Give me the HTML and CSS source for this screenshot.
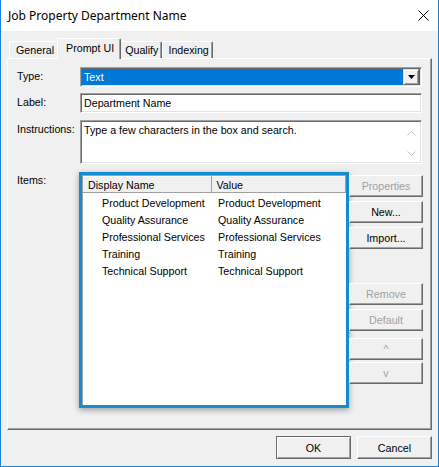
FILE: index.html
```html
<!DOCTYPE html>
<html lang="en">

<head>
    <meta charset="UTF-8">
    <meta name="viewport" content="width=device-width, initial-scale=1.0">
    <title>Job Property Department Name</title>
    <link rel="stylesheet" href="styles.css">
</head>

<body>
    <div class="window">
        <!-- title bar -->
        <div class="titlebar">
            <span class="title">Job Property Department Name</span>
            <svg class="close" width="11" height="11" viewBox="0 0 11 11">
                <path d="M0.5 0.5 L10.5 10.5 M10.5 0.5 L0.5 10.5" stroke="#000" stroke-width="1" fill="none" />
            </svg>
        </div>

        <div class="body">
            <!-- tabs -->
            <div class="tabs">
                <div class="tab">General</div>
                <div class="tab tab-active">Prompt UI</div>
                <div class="tab">Qualify</div>
                <div class="tab">Indexing</div>
            </div>

            <div class="panel">
                <div class="row row-type">
                    <div class="lbl">Type:</div>
                    <div class="select">
                        <span class="select-value">Text</span>
                        <span class="drop-btn">
                            <svg width="7" height="4" viewBox="0 0 7 4"><path d="M0 0 H7 L3.5 4 Z" fill="#000" /></svg>
                        </span>
                    </div>
                </div>

                <div class="row row-label">
                    <div class="lbl">Label:</div>
                    <div class="edit">Department Name</div>
                </div>

                <div class="row row-instr">
                    <div class="lbl">Instructions:</div>
                    <div class="edit memo">
                        <span class="memo-text">Type a few characters in the box and search.</span>
                        <span class="vscroll">
                            <svg width="9" height="5" viewBox="0 0 9 5"><path d="M0.5 4.5 L4.5 0.5 L8.5 4.5" stroke="#c4c4c4" fill="none" /></svg>
                            <svg width="9" height="5" viewBox="0 0 9 5"><path d="M0.5 0.5 L4.5 4.5 L8.5 0.5" stroke="#c4c4c4" fill="none" /></svg>
                        </span>
                    </div>
                </div>

                <div class="row row-items">
                    <div class="lbl">Items:</div>
                    <div class="items">
                        <div class="list-frame">
                            <div class="listview">
                                <table>
                                    <thead>
                                        <tr>
                                            <th class="col-name">Display Name</th>
                                            <th>Value</th>
                                        </tr>
                                    </thead>
                                    <tbody>
                                        <tr><td class="col-name">Product Development</td><td>Product Development</td></tr>
                                        <tr><td class="col-name">Quality Assurance</td><td>Quality Assurance</td></tr>
                                        <tr><td class="col-name">Professional Services</td><td>Professional Services</td></tr>
                                        <tr><td class="col-name">Training</td><td>Training</td></tr>
                                        <tr><td class="col-name">Technical Support</td><td>Technical Support</td></tr>
                                    </tbody>
                                </table>
                            </div>
                        </div>

                        <div class="side-btns">
                            <button class="btn" disabled>Properties</button>
                            <button class="btn">New...</button>
                            <button class="btn">Import...</button>
                            <button class="btn btn-remove" disabled>Remove</button>
                            <button class="btn" disabled>Default</button>
                            <button class="btn btn-up" disabled>^</button>
                            <button class="btn btn-down" disabled>v</button>
                        </div>
                    </div>
                </div>
            </div>

            <!-- footer -->
            <div class="footer">
                <button class="btn btn-default">OK</button>
                <button class="btn">Cancel</button>
            </div>
        </div>
    </div>
</body>

</html>
```

FILE: styles.css
```css
* {
    box-sizing: border-box;
}

body {
    margin: 0;
    font-family: "Liberation Sans", Arial, sans-serif;
    font-size: 10.7px;
    color: #000;
}

.window {
    width: 439px;
    height: 467px;
    border: 1px solid #1883d7;
    border-top: 0;
    background: #f0f0f0;
    display: flex;
    flex-direction: column;
}

/* title bar */
.titlebar {
    height: 31px;
    background: #fff;
    display: flex;
    align-items: center;
    justify-content: space-between;
    padding: 0 9px 0 7px;
}

.title {
    font-family: "Noto Sans", sans-serif;
    font-size: 12px;
    margin-top: -1px;
}

.close {
    margin-top: -1px;
}

.body {
    flex: 1;
    padding: 0 6px 0 6px;
    display: flex;
    flex-direction: column;
}

/* tabs */
.tabs {
    display: flex;
    align-items: flex-end;
    height: 20px;
    margin-top: 7px;
    padding-left: 2px;
    position: relative;
    z-index: 1;
}

.tab {
    height: 17px;
    padding: 2px 3px 0 5px;
    border-top: 1px solid #fff;
    border-left: 1px solid #fff;
    border-right: 1px solid #696969;
    box-shadow: inset -1px 0 #a0a0a0;
    border-top-left-radius: 2px;
    border-top-right-radius: 2px;
    background: #f0f0f0;
}

.tab:first-child {
    padding: 2px 4px 0 6px;
}

.tab-active {
    height: 21px;
    margin: 0 -2px -1px -2px;
    padding: 3px 6px 0 8px;
    position: relative;
}

.panel {
    height: 372px;
    border-top: 1px solid #fff;
    border-left: 1px solid #fff;
    border-right: 1px solid #696969;
    border-bottom: 1px solid #696969;
    box-shadow: inset -1px -1px #a0a0a0;
    padding: 8px 9px 0 9px;
}

.row {
    display: grid;
    grid-template-columns: 63px 1fr;
}

.row-label {
    margin-top: 6px;
}

.row-instr {
    margin-top: 7px;
}

.row-items {
    margin-top: 8px;
}

.lbl {
    padding-top: 3px;
}

.row-items .lbl {
    padding-top: 2px;
}

/* sunken edit boxes */
.select,
.edit {
    height: 20px;
    border-top: 1px solid #a0a0a0;
    border-left: 1px solid #a0a0a0;
    border-right: 1px solid #fff;
    border-bottom: 1px solid #fff;
    box-shadow: inset 1px 1px #696969, inset -1px -1px #e3e3e3;
    background: #fff;
}

.select {
    background: #0078d7;
    color: #fff;
    display: flex;
    align-items: center;
    justify-content: space-between;
    padding: 0 2px 0 3px;
}

.select-value {
    margin-top: -1px;
}

.drop-btn {
    width: 16px;
    height: 16px;
    background: #f0f0f0;
    border-top: 1px solid #e3e3e3;
    border-left: 1px solid #e3e3e3;
    border-right: 1px solid #696969;
    border-bottom: 1px solid #696969;
    box-shadow: inset 1px 1px #fff, inset -1px -1px #a0a0a0;
    display: flex;
    align-items: center;
    justify-content: center;
}

.edit {
    padding: 3px 3px 0 3px;
}

.memo {
    height: 44px;
    display: flex;
    justify-content: space-between;
    padding: 3px 1px 1px 3px;
}

.vscroll {
    width: 17px;
    display: flex;
    flex-direction: column;
    justify-content: space-between;
    align-items: center;
    padding: 7px 0 6px 0;
    background: #fff;
}

/* items list */
.items {
    display: flex;
    margin-left: -1px;
}

.list-frame {
    width: 270px;
    height: 236px;
    border: 3px solid #168bd0;
    box-shadow: 0 2px 6px rgba(0, 0, 0, 0.35);
    background: #fff;
}

.listview {
    height: 100%;
    border-top: 1px solid #a0a0a0;
    border-left: 1px solid #a0a0a0;
}

table {
    width: 263px;
    border-collapse: collapse;
}

th {
    height: 16px;
    font-weight: normal;
    text-align: left;
    padding: 0 0 0 5px;
    background: #f0f0f0;
    border-top: 1px solid #fff;
    border-bottom: 1px solid #a0a0a0;
    border-right: 1px solid #a0a0a0;
}

th.col-name {
    width: 128px;
}

td {
    height: 17px;
    padding: 0 0 0 7px;
    white-space: nowrap;
}

td.col-name {
    padding-left: 19px;
}

tbody tr:first-child td {
    padding-top: 2px;
    height: 19px;
}

.side-btns {
    width: 74px;
    display: flex;
    flex-direction: column;
    padding-top: 3px;
}

/* 3d push buttons */
.btn {
    font-family: "Liberation Sans", Arial, sans-serif;
    font-size: 10.7px;
    color: #000;
    height: 22px;
    background: #f0f0f0;
    border-top: 1px solid #fff;
    border-left: 1px solid #fff;
    border-right: 1px solid #696969;
    border-bottom: 1px solid #696969;
    box-shadow: inset -1px -1px #a0a0a0;
    border-radius: 0;
    padding: 0;
    margin: 0 0 4px 0;
}

.btn:disabled {
    color: #a0a0a0;
}

.btn-remove {
    margin-top: 30px;
}

.btn-up {
    margin-top: 3px;
    margin-bottom: 2px;
}

.footer {
    display: flex;
    justify-content: flex-end;
    gap: 6px;
    margin-top: 6px;
}

.footer .btn {
    width: 75px;
    height: 23px;
    margin: 0;
}

.btn-default {
    border: 1px solid #696969;
    box-shadow: inset 1px 1px #fff, inset -1px -1px #a0a0a0;
}
```
